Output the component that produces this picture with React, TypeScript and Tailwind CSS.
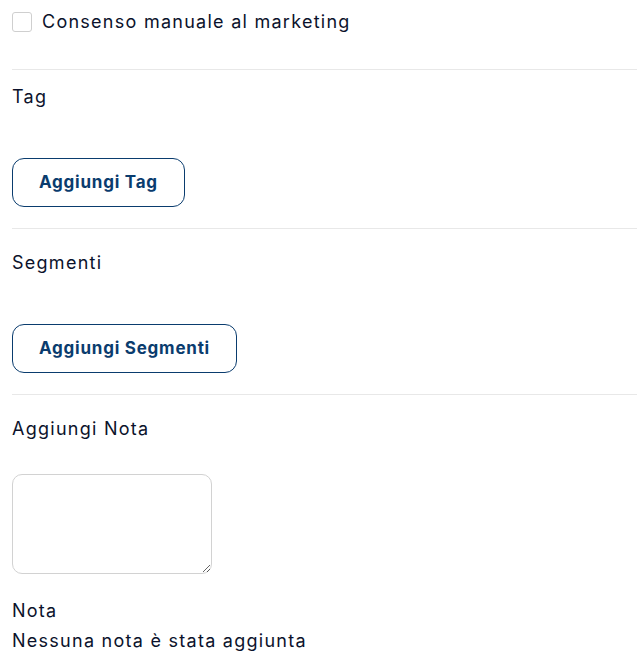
import { useState } from "react";

const labelClasses = "text-[18px] leading-[28px] tracking-[0.07em] text-[#0b122b]";
const buttonClasses =
  "h-[49px] px-[26px] rounded-[12px] border border-[#0a3c6e] bg-white text-[17px] font-bold tracking-[0.045em] text-[#0a3c6e]";

export default function App() {
  const [consent, setConsent] = useState(false);
  const [note, setNote] = useState("");

  return (
    <div className="min-h-screen bg-white pl-3 font-['Inter',sans-serif] text-[#0b122b]">
      <label className="flex items-center gap-[10px] pt-2 pb-[33px]">
        <input
          type="checkbox"
          checked={consent}
          onChange={(e) => setConsent(e.target.checked)}
          className="h-5 w-5 appearance-none rounded-[3px] border border-[#cfcfcf] bg-white"
        />
        <span className={labelClasses}>Consenso manuale al marketing</span>
      </label>

      <div className="border-t border-[#e8e8e8] pt-[13px] pb-[21px]">
        <p className={labelClasses}>Tag</p>
        <button type="button" className={`${buttonClasses} mt-[47px]`}>
          Aggiungi Tag
        </button>
      </div>

      <div className="border-t border-[#e8e8e8] pt-[20px] pb-[21px]">
        <p className={labelClasses}>Segmenti</p>
        <button type="button" className={`${buttonClasses} mt-[47px]`}>
          Aggiungi Segmenti
        </button>
      </div>

      <div className="border-t border-[#e8e8e8] pt-[20px]">
        <p className={labelClasses}>Aggiungi Nota</p>
        <textarea
          value={note}
          onChange={(e) => setNote(e.target.value)}
          className="mt-[31px] block h-[100px] w-[200px] rounded-[10px] border border-[#d2d2d2] p-2 text-[16px]"
        />
        <p className={`${labelClasses} mt-[23px]`}>Nota</p>
        <p className={`${labelClasses} mt-[2px]`}>Nessuna nota è stata aggiunta</p>
      </div>
    </div>
  );
}
